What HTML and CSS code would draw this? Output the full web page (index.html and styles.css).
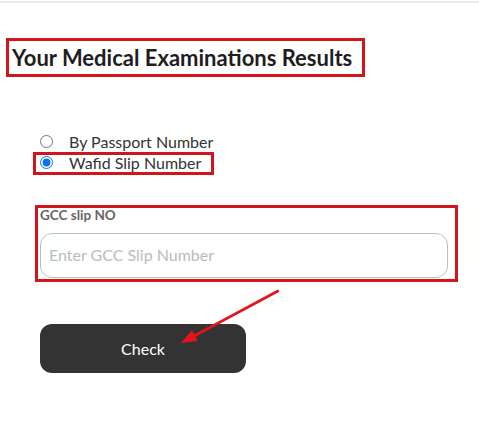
FILE: index.html
```html
<!DOCTYPE html>
<html lang="en">
<head>
<meta charset="utf-8">
<title>Your Medical Examinations Results</title>
<link rel="stylesheet" href="styles.css">
</head>
<body>
<div class="topline"></div>
<main class="page">
  <h1 class="title">Your Medical Examinations Results</h1>
  <div class="options">
    <label class="opt"><input type="radio" name="by" class="radio"><span>By Passport Number</span></label>
    <label class="opt opt-hl"><input type="radio" name="by" class="radio" checked><span>Wafid Slip Number</span></label>
  </div>
  <div class="field">
    <label class="field-label" for="slip">GCC slip NO</label>
    <input id="slip" class="field-input" type="text" placeholder="Enter GCC Slip Number">
  </div>
  <div class="actions">
    <button class="btn" type="button">Check</button>
  </div>
  <svg class="arrow" width="479" height="431" viewBox="0 0 479 431" aria-hidden="true">
    <line x1="278" y1="291" x2="194" y2="336" stroke="#e3141b" stroke-width="2.6" stroke-linecap="round"/>
    <polygon points="181,343 192,330 198,341" fill="#e3141b"/>
  </svg>
</main>
</body>
</html>
```

FILE: styles.css
```css
* { box-sizing: border-box; }
html, body { margin: 0; padding: 0; background: #fff; }
body { font-family: Lato, "Open Sans", Arial, sans-serif; color: #333; width: 479px; height: 431px; overflow: hidden; }
.topline { height: 2px; margin-top: 1px; background: #ececec; }
.page { position: relative; display: flex; flex-direction: column; align-items: flex-start; padding-left: 6px; }
.title {
  margin: 35px 0 0 0;
  width: 359px; height: 39px;
  border: 3px solid #d1151c;
  padding: 0 0 0 3px;
  font-size: 22px; font-weight: 700; line-height: 33px;
  color: #1e1e1e; letter-spacing: 0;
  font-family: Lato, sans-serif;
}
.options { display: flex; flex-direction: column; margin: 54px 0 0 27px; }
.opt { display: flex; align-items: center; height: 21px; border: 3px solid transparent; padding-left: 4px; font-size: 16px; color: #333; }
.opt-hl { height: 23px; width: 181px; border-color: #d1151c; padding-bottom: 2px; }
.radio { margin: 0 16px 0 0; width: 13px; height: 13px; accent-color: #0a74e8; }
.field { display: flex; flex-direction: column; margin: 30px 0 0 29px; width: 423px; height: 77px; border: 3px solid #d1151c; padding: 0 7px 1px 2px; }
.field-label { font-size: 13.5px; font-weight: 700; color: #666; line-height: 16px; margin-top: -1px; }
.field-input {
  margin-top: auto; width: 100%; height: 45px;
  border: 1px solid #bdbdbd; border-radius: 12px;
  padding: 0 8px 2px; font-family: Lato, sans-serif; font-size: 16px; color: #333; background: #fff;
}
.field-input::placeholder { color: #bbb; }
.actions { margin: 42px 0 0 34px; }
.btn {
  width: 206px; height: 49px; border: 0; border-radius: 12px; padding-bottom: 2px;
  background: #333; color: #fff; font-family: Lato, sans-serif; font-size: 16px;
}
.arrow { position: absolute; left: 0; top: -3px; pointer-events: none; }
```
